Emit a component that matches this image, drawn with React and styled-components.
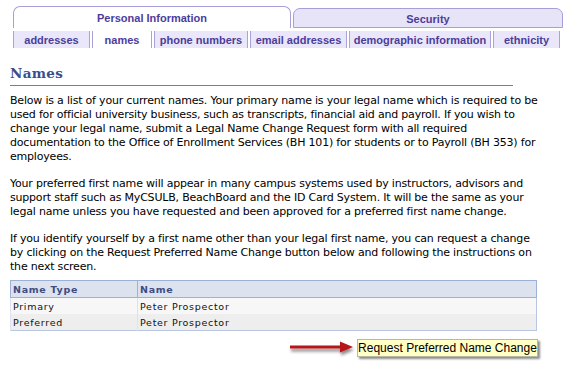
import React from 'react';
import styled, { createGlobalStyle } from 'styled-components';

const GlobalStyle = createGlobalStyle`
  html, body {
    margin: 0;
    padding: 0;
    background: #fff;
  }
  body {
    font-family: 'DejaVu Sans', Verdana, sans-serif;
  }
`;

const Page = styled.div`
  width: 575px;
  height: 366px;
  overflow: hidden;
  background: #fff;
`;

const TopTabs = styled.div`
  display: flex;
  align-items: flex-end;
  gap: 2px;
  padding: 6px 0 0 13px;
  height: 22px;
`;

const TopTab = styled.div`
  width: ${(p) => p.$w}px;
  height: ${(p) => (p.$active ? 22 : 20)}px;
  box-sizing: border-box;
  display: flex;
  align-items: center;
  justify-content: center;
  border: 1px solid #a79fd9;
  border-bottom: ${(p) => (p.$active ? 'none' : '1px solid #a79fd9')};
  border-radius: 7px 7px 0 0;
  background: ${(p) => (p.$active ? '#fff' : '#e7e4f8')};
  color: #4c3d9a;
  font-family: 'Liberation Sans', Arial, sans-serif;
  font-weight: bold;
  font-size: 11px;
  padding-top: ${(p) => (p.$active ? 0 : 1)}px;
`;

const SubTabs = styled.div`
  display: flex;
  gap: 2px;
  padding: 3px 0 0 13px;
`;

const SubTab = styled.div`
  width: ${(p) => p.$w}px;
  height: 17px;
  box-sizing: border-box;
  display: flex;
  align-items: center;
  justify-content: center;
  border-left: 1px solid #aaa3da;
  border-right: 1px solid #aaa3da;
  background: ${(p) => (p.$active ? '#fff' : '#e9e7f9')};
  color: #4c3d9a;
  font-family: 'Liberation Sans', Arial, sans-serif;
  font-weight: bold;
  font-size: 11px;
`;

const Content = styled.div`
  padding: 0 0 0 10px;
  width: 536px;
`;

const Heading = styled.h1`
  margin: 17px 0 0;
  width: 503px;
  padding-bottom: 4px;
  border-bottom: 1px solid #6b7cc0;
  color: #3d4d8c;
  font-family: 'DejaVu Serif', Georgia, serif;
  font-weight: bold;
  font-size: 13.5px;
  line-height: 16px;
  letter-spacing: 0.3px;
`;

const Para = styled.p`
  margin: ${(p) => (p.$first ? 8 : 13)}px 0 0;
  color: #000;
  font-family: 'DejaVu Sans', Verdana, sans-serif;
  font-size: 11px;
  line-height: 14px;
  letter-spacing: -0.2px;
`;

const Table = styled.table`
  margin-top: 6px;
  width: 527px;
  border-collapse: collapse;
  border: 1px solid #b9c6e2;
  font-family: 'DejaVu Sans', Verdana, sans-serif;
  font-size: 9.5px;
  letter-spacing: 0.7px;
`;

const HeadCell = styled.th`
  text-align: left;
  height: 16px;
  padding: 0 0 0 2px;
  background: #dce3ef;
  border: 1px solid #9cb0d8;
  color: #3e4c84;
  font-weight: bold;
  width: ${(p) => (p.$w ? `${p.$w}px` : 'auto')};
`;

const Cell = styled.td`
  height: 16px;
  padding: 0 0 0 2px;
  background: ${(p) => (p.$alt ? '#eeeeee' : '#f7f7f7')};
  border-left: 1px solid #dde2ee;
  color: #111;
`;

const ActionRow = styled.div`
  display: flex;
  justify-content: flex-end;
  align-items: center;
  gap: 1px;
  margin-top: 7px;
  width: 528px;
`;

const Button = styled.button`
  height: 18px;
  width: 181px;
  padding: 0;
  border: 1px solid #b8b8a0;
  background: #ffffc6;
  box-shadow: 2px 2px 2px rgba(0, 0, 0, 0.45);
  font-family: 'Liberation Sans', Arial, sans-serif;
  font-size: 12px;
  color: #000;
  line-height: 16px;
  cursor: pointer;
`;

const topTabs = [
  { label: 'Personal Information', w: 278, active: true },
  { label: 'Security', w: 270 },
];

const subTabs = [
  { label: 'addresses', w: 77 },
  { label: 'names', w: 60, active: true },
  { label: 'phone numbers', w: 94 },
  { label: 'email addresses', w: 97 },
  { label: 'demographic information', w: 142 },
  { label: 'ethnicity', w: 67 },
];

const names = [
  { type: 'Primary', name: 'Peter Prospector' },
  { type: 'Preferred', name: 'Peter Prospector' },
];

function Arrow() {
  return (
    <svg width="68" height="20" viewBox="0 0 68 20">
      <defs>
        <filter id="sh" x="-20%" y="-50%" width="140%" height="200%">
          <feDropShadow dx="1" dy="3" stdDeviation="1.5" floodColor="#000" floodOpacity="0.45" />
        </filter>
      </defs>
      <g filter="url(#sh)">
        <rect x="2" y="7.5" width="52" height="3" fill="#b5151a" />
        <polygon points="52,3.5 65,9 52,14.5" fill="#b5151a" />
      </g>
    </svg>
  );
}

export default function App() {
  return (
    <Page>
      <GlobalStyle />
      <TopTabs>
        {topTabs.map((t) => (
          <TopTab key={t.label} $w={t.w} $active={t.active}>
            {t.label}
          </TopTab>
        ))}
      </TopTabs>
      <SubTabs>
        {subTabs.map((t) => (
          <SubTab key={t.label} $w={t.w} $active={t.active}>
            {t.label}
          </SubTab>
        ))}
      </SubTabs>
      <Content>
        <Heading>Names</Heading>
        <Para $first>
          Below is a list of your current names. Your primary name is your legal name which is required to be
          used for official university business, such as transcripts, financial aid and payroll. If you wish to
          change your legal name, submit a Legal Name Change Request form with all required
          documentation to the Office of Enrollment Services (BH 101) for students or to Payroll (BH 353) for
          employees.
        </Para>
        <Para>
          Your preferred first name will appear in many campus systems used by instructors, advisors and
          support staff such as MyCSULB, BeachBoard and the ID Card System. It will be the same as your
          legal name unless you have requested and been approved for a preferred first name change.
        </Para>
        <Para>
          If you identify yourself by a first name other than your legal first name, you can request a change
          by clicking on the Request Preferred Name Change button below and following the instructions on
          the next screen.
        </Para>
        <Table>
          <thead>
            <tr>
              <HeadCell $w={124}>Name Type</HeadCell>
              <HeadCell>Name</HeadCell>
            </tr>
          </thead>
          <tbody>
            {names.map((n, i) => (
              <tr key={n.type}>
                <Cell $alt={i % 2 === 1}>{n.type}</Cell>
                <Cell $alt={i % 2 === 1}>{n.name}</Cell>
              </tr>
            ))}
          </tbody>
        </Table>
        <ActionRow>
          <Arrow />
          <Button>Request Preferred Name Change</Button>
        </ActionRow>
      </Content>
    </Page>
  );
}
